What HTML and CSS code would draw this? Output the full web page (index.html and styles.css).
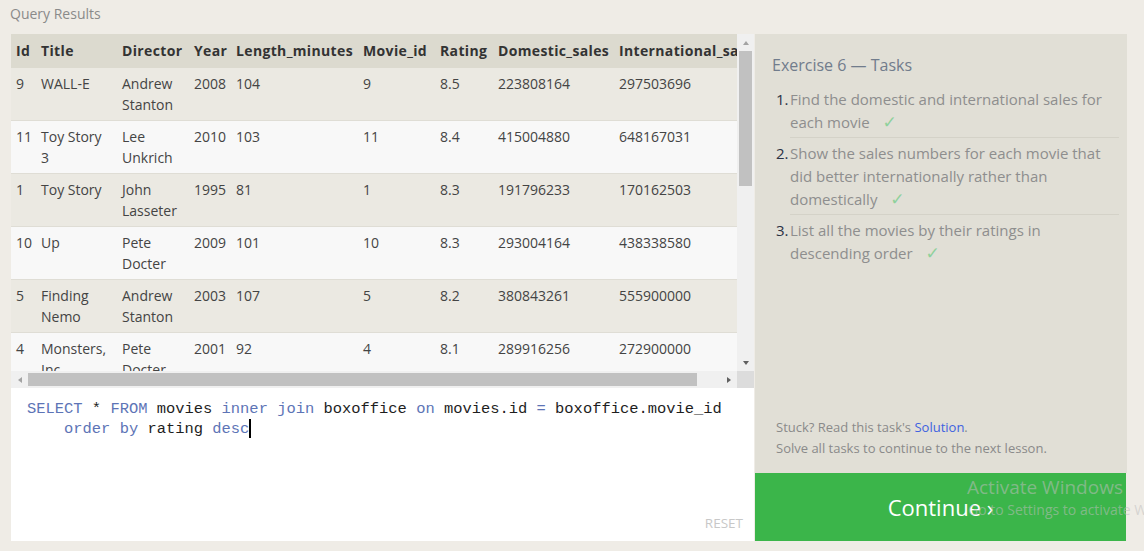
FILE: index.html
```html
<!DOCTYPE html>
<html lang="en">
<head>
<meta charset="utf-8">
<title>SQL Lesson - Exercise 6</title>
<link rel="stylesheet" href="styles.css">
</head>
<body>
<div class="page">
  <div class="caption">Query Results</div>
  <div class="main">
    <div class="left">
      <div class="results">
        <div class="viewport">
          <table class="grid">
            <colgroup>
              <col class="c-id"><col class="c-title"><col class="c-dir"><col class="c-year"><col class="c-len"><col class="c-mid"><col class="c-rat"><col class="c-dom"><col class="c-int">
            </colgroup>
            <thead>
              <tr><th>Id</th><th>Title</th><th>Director</th><th>Year</th><th>Length_minutes</th><th>Movie_id</th><th>Rating</th><th>Domestic_sales</th><th>International_sales</th></tr>
            </thead>
            <tbody>
              <tr><td>9</td><td>WALL-E</td><td>Andrew Stanton</td><td>2008</td><td>104</td><td>9</td><td>8.5</td><td>223808164</td><td>297503696</td></tr>
              <tr><td>11</td><td>Toy Story 3</td><td>Lee Unkrich</td><td>2010</td><td>103</td><td>11</td><td>8.4</td><td>415004880</td><td>648167031</td></tr>
              <tr><td>1</td><td>Toy Story</td><td>John Lasseter</td><td>1995</td><td>81</td><td>1</td><td>8.3</td><td>191796233</td><td>170162503</td></tr>
              <tr><td>10</td><td>Up</td><td>Pete Docter</td><td>2009</td><td>101</td><td>10</td><td>8.3</td><td>293004164</td><td>438338580</td></tr>
              <tr><td>5</td><td>Finding Nemo</td><td>Andrew Stanton</td><td>2003</td><td>107</td><td>5</td><td>8.2</td><td>380843261</td><td>555900000</td></tr>
              <tr><td>4</td><td>Monsters, Inc.</td><td>Pete Docter</td><td>2001</td><td>92</td><td>4</td><td>8.1</td><td>289916256</td><td>272900000</td></tr>
              <tr><td>6</td><td>The Incredibles</td><td>Brad Bird</td><td>2004</td><td>116</td><td>6</td><td>8</td><td>261441092</td><td>370001000</td></tr>
              <tr><td>8</td><td>Ratatouille</td><td>Brad Bird</td><td>2007</td><td>115</td><td>8</td><td>8</td><td>206445654</td><td>417277164</td></tr>
            </tbody>
          </table>
        </div>
        <div class="vscroll">
          <div class="arrow"><span class="tri tri-up"></span></div>
          <div class="vtrack"><div class="vthumb"></div></div>
          <div class="arrow"><span class="tri tri-down"></span></div>
        </div>
        <div class="hscroll">
          <div class="arrow"><span class="tri tri-left"></span></div>
          <div class="htrack"><div class="hthumb"></div></div>
          <div class="arrow"><span class="tri tri-right"></span></div>
        </div>
        <div class="corner"></div>
      </div>
      <div class="editor">
<pre class="code"><span class="kw">SELECT</span> * <span class="kw">FROM</span> movies <span class="kw">inner join</span> boxoffice <span class="kw">on</span> movies.id <span class="kw">=</span> boxoffice.movie_id
    <span class="kw">order by</span> rating <span class="kw">desc</span><span class="cursor"></span></pre>
        <div class="reset">RESET</div>
      </div>
    </div>
    <div class="right">
      <div class="tasks">
        <h2 class="tasks-title">Exercise 6 — Tasks</h2>
        <ol class="task-list">
          <li class="task"><span class="num">1.</span><span class="txt">Find the domestic and international sales for each movie <span class="check">✓</span></span></li>
          <li class="task"><span class="num">2.</span><span class="txt">Show the sales numbers for each movie that did better internationally rather than domestically <span class="check">✓</span></span></li>
          <li class="task last"><span class="num">3.</span><span class="txt">List all the movies by their ratings in descending order <span class="check">✓</span></span></li>
        </ol>
        <div class="footer">
          <div>Stuck? Read this task's <a class="link" href="#">Solution</a>.</div>
          <div>Solve all tasks to continue to the next lesson.</div>
        </div>
      </div>
      <div class="continue">Continue ›</div>
    </div>
  </div>
  <div class="watermark">
    <div class="wm-1">Activate Windows</div>
    <div class="wm-2">Go to Settings to activate Windows.</div>
  </div>
</div>
</body>
</html>
```

FILE: styles.css
```css
html, body {
  margin: 0;
  padding: 0;
  background: #efece6;
}

body {
  font-family: "Open Sans", "Liberation Sans", sans-serif;
  width: 1144px;
  height: 551px;
  overflow: hidden;
}

.page {
  position: relative;
  padding: 0 17px 10px 11px;
}

.caption {
  height: 34px;
  line-height: 28px;
  font-size: 14px;
  color: #8a8a8a;
  margin-left: -1px;
}

.main {
  display: grid;
  grid-template-columns: 743px 372px;
  column-gap: 1px;
  height: 507px;
}

/* ---------- left side ---------- */
.left {
  display: flex;
  flex-direction: column;
}

.results {
  display: grid;
  grid-template-columns: 726px 17px;
  grid-template-rows: 337px 17px;
  background: #f8f8f8;
}

.viewport {
  overflow: hidden;
}

.grid {
  border-collapse: collapse;
  table-layout: fixed;
  width: 751px;
  font-size: 14px;
  color: #444;
}

.c-id { width: 25px; }
.c-title { width: 81px; }
.c-dir { width: 72px; }
.c-year { width: 42px; }
.c-len { width: 127px; }
.c-mid { width: 77px; }
.c-rat { width: 58px; }
.c-dom { width: 121px; }
.c-int { width: 148px; }

.grid th {
  background: #dcdacf;
  color: #333;
  font-weight: 700;
  text-align: left;
  padding: 6px 5px 7px;
  line-height: 21px;
  letter-spacing: 0.35px;
  white-space: nowrap;
  overflow: hidden;
}

.grid td {
  vertical-align: top;
  padding: 5px 5px 5px;
  line-height: 21px;
  border-bottom: 1px solid #dfddd5;
}

.grid tbody tr:nth-child(odd) td {
  background: #ebe9e2;
}

.grid tbody tr:nth-child(even) td {
  background: #f8f8f8;
}

.vscroll {
  background: #f0f0f0;
  display: flex;
  flex-direction: column;
}

.hscroll {
  background: #f0f0f0;
  display: flex;
  flex-direction: row;
}

.corner {
  background: #dcdcdc;
}

.arrow {
  width: 17px;
  height: 17px;
  display: flex;
  align-items: center;
  justify-content: center;
  flex: none;
}

.tri {
  width: 0;
  height: 0;
  border-style: solid;
}

.tri-up {
  border-width: 0 3.5px 4px 3.5px;
  border-color: transparent transparent #a3a3a3 transparent;
}

.tri-down {
  border-width: 4px 3.5px 0 3.5px;
  border-color: #606060 transparent transparent transparent;
}

.tri-left {
  border-width: 3.5px 4px 3.5px 0;
  border-color: transparent #a3a3a3 transparent transparent;
}

.tri-right {
  border-width: 3.5px 0 3.5px 4px;
  border-color: transparent transparent transparent #606060;
}

.vtrack {
  flex: 1;
  padding: 0 2px;
}

.vthumb {
  height: 135px;
  background: #c1c1c1;
}

.htrack {
  flex: 1;
  padding: 2px 0;
}

.hthumb {
  width: 669px;
  height: 13px;
  background: #c1c1c1;
}

.editor {
  flex: 1;
  background: #fff;
  display: flex;
  flex-direction: column;
}

.code {
  flex: 1;
  margin: 0;
  padding: 11px 0 0 16px;
  font-family: "Liberation Mono", "DejaVu Sans Mono", monospace;
  font-size: 15.45px;
  line-height: 20px;
  color: #1e1e1e;
  white-space: pre;
}

.kw {
  color: #5d74b6;
}

.cursor {
  display: inline-block;
  width: 0;
  height: 19px;
  border-left: 2px solid #000;
  vertical-align: -5px;
}

.reset {
  align-self: flex-end;
  padding: 0 11px 9px 0;
  font-size: 13.5px;
  line-height: 18px;
  color: #c8c8c8;
}

/* ---------- right side ---------- */
.right {
  display: flex;
  flex-direction: column;
}

.tasks {
  flex: 1;
  background: #e1dfd6;
  padding: 20px 8px 0 17px;
  display: flex;
  flex-direction: column;
}

.tasks-title {
  margin: 0 0 8px;
  font-size: 16px;
  font-weight: 400;
  line-height: 22px;
  color: #717c8c;
}

.task-list {
  list-style: none;
  margin: 0 0 0 4px;
  padding: 0;
  font-size: 15px;
  line-height: 23px;
}

.task {
  display: flex;
}

.num {
  width: 14px;
  flex: none;
  padding-top: 4px;
  color: #2b3245;
}

.txt {
  flex: 1;
  padding: 4px 0 3px;
  border-bottom: 1px solid #d4d2c8;
  color: #8e8e8e;
}

.task.last .txt {
  border-bottom: none;
}

.check {
  color: #8fd19c;
  margin-left: 9px;
  font-family: "DejaVu Sans", sans-serif;
  font-size: 17px;
  line-height: 20px;
}

.footer {
  margin-top: auto;
  margin-left: 4px;
  padding-bottom: 14px;
  font-size: 13px;
  line-height: 21px;
  color: #8a8a8a;
}

.link {
  color: #3e62e0;
  text-decoration: none;
}

.continue {
  height: 68px;
  margin-right: 1px;
  background: #3bb54a;
  color: #fff;
  font-size: 22px;
  display: flex;
  align-items: center;
  justify-content: center;
}

/* OS watermark overlay */
.watermark {
  position: absolute;
  left: 967px;
  top: 474px;
  color: rgba(190, 190, 190, 0.55);
  white-space: nowrap;
  pointer-events: none;
}

.wm-1 {
  font-size: 19px;
  line-height: 26px;
}

.wm-2 {
  font-size: 14px;
  line-height: 20px;
  margin-left: 1px;
}
```
